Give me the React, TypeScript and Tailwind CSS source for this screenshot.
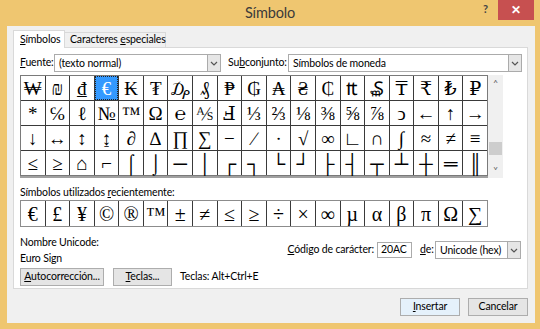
import React from 'react';

const ui = { fontFamily: 'Lato, "Noto Sans", sans-serif', letterSpacing: '-0.15px' };
const serif = { fontFamily: '"Liberation Serif", "DejaVu Serif", serif', letterSpacing: '0' };

const rows = [
  ['₩', '₪', '₫', '€', '₭', '₮', '₯', '₰', '₱', '₲', '₳', '₴', '₵', '₶', '₷', '₸', '₹', '₺', '₽'],
  ['*', '℅', 'ℓ', '№', '™', 'Ω', '℮', '⅍', 'Ⅎ', '⅓', '⅔', '⅛', '⅜', '⅝', '⅞', 'ↄ', '←', '↑', '→'],
  ['↓', '↔', '↕', '↨', '∂', '∆', '∏', '∑', '−', '∕', '∙', '√', '∞', '∟', '∩', '∫', '≈', '≠', '≡'],
  ['≤', '≥', '⌂', '⌐', '⌠', '⌡', '─', '│', '┌', '┐', '└', '┘', '├', '┤', '┬', '┴', '┼', '═', '║'],
];

const recent = ['€', '£', '¥', '©', '®', '™', '±', '≠', '≤', '≥', '÷', '×', '∞', 'µ', 'α', 'β', 'π', 'Ω', '∑'];

function Chevron() {
  return (
    <svg width="8" height="5" viewBox="0 0 8 5" className="text-[#555]">
      <path d="M1 1l3 3 3-3" fill="none" stroke="currentColor" strokeWidth="1.2" />
    </svg>
  );
}

function Select({ value, className }: { value: string; className: string }) {
  return (
    <div className={`flex h-[18px] shrink-0 items-stretch border border-[#ABABAB] bg-white ${className}`}>
      <div className="flex-1 whitespace-nowrap pl-[4px] leading-[16px] text-black">{value}</div>
      <div className="flex w-[13px] items-center justify-center border-l border-[#ABABAB] bg-[#E6E6E6]">
        <Chevron />
      </div>
    </div>
  );
}

function Button({ children, className = '' }: { children: React.ReactNode; className?: string }) {
  return (
    <div
      className={`flex h-[18px] shrink-0 items-center justify-center whitespace-nowrap border border-[#ADADAD] bg-[#E5E5E5] text-black ${className}`}
    >
      {children}
    </div>
  );
}

export default function App() {
  return (
    <div className="flex h-[329px] w-[540px] flex-col overflow-hidden bg-[#EFC670]" style={ui}>
      {/* title bar */}
      <div className="relative flex h-[26px] items-center justify-center">
        <span className="text-[14.5px] text-[#3A3A3A]">Símbolo</span>
        <div className="absolute right-[6px] top-0 flex items-start">
          <span className="mr-[10px] mt-[1px] text-[11px] font-bold text-[#444]">?</span>
          <div className="flex h-[20px] w-[36px] items-center justify-center bg-[#C75050] text-[12px] font-bold text-white">
            ✕
          </div>
        </div>
      </div>

      {/* body */}
      <div className="mb-[6px] ml-[7px] mr-[5px] flex flex-1 flex-col whitespace-nowrap bg-[#F0F0F0] text-[10.5px] text-black">
        {/* tabs */}
        <div className="flex h-[21px] items-end pl-[6px] pt-[4px]">
          <div className="relative z-10 -mb-px flex h-[18px] w-[52px] items-start border border-b-0 border-[#D9D9D9] bg-white pl-[6px] pt-[1px]">
            <span>
              <u>S</u>ímbolos
            </span>
          </div>
          <div className="flex h-[15px] w-[101px] items-center border border-b-0 border-l-0 border-[#D9D9D9] bg-[#F0F0F0] pl-[5px]">
            <span>
              Caracteres <u>e</u>speciales
            </span>
          </div>
        </div>

        {/* panel */}
        <div className="ml-[6px] mr-[7px] flex h-[242px] flex-col border border-[#D9D9D9] bg-white px-[6px] pt-[6px]">
          {/* font row */}
          <div className="flex h-[18px] items-center">
            <span className="w-[34px] shrink-0">
              <u>F</u>uente:
            </span>
            <Select value="(texto normal)" className="w-[167px]" />
            <span className="ml-[7px] w-[60px] shrink-0">
              Su<u>b</u>conjunto:
            </span>
            <Select value="Símbolos de moneda" className="w-[234px]" />
          </div>

          {/* grid + scrollbar */}
          <div className="mt-[3px] flex">
            <div className="w-[468px] border-b-2 border-[#A0A0A0]">
              <div className="grid grid-cols-[repeat(19,minmax(0,1fr))] gap-px border border-[#7A7A7A] bg-[#3A3A3A]">
                {rows.flat().map((c, i) => (
                  <div
                    key={i}
                    className={`flex h-[24px] items-center justify-center text-[19px] leading-none ${
                      i === 3 ? 'border border-dotted border-[#222] bg-[#3399FF] text-white' : 'bg-white text-black'
                    }`}
                    style={serif}
                  >
                    {c}
                  </div>
                ))}
              </div>
            </div>
            <div className="flex w-[15px] flex-col items-center bg-[#F0F0F0]">
              <span className="mt-[1px] h-[14px] text-[10px] leading-[14px] text-[#606060]">˄</span>
              <div className="mt-[52px] h-[13px] w-[13px] bg-[#CDCDCD]" />
              <div className="flex-1" />
              <span className="mb-[2px] h-[12px] text-[10px] leading-[12px] text-[#606060]">˅</span>
            </div>
          </div>

          {/* recent */}
          <div className="mt-[7px] h-[15px] leading-[15px]">
            Símbolos utilizados <u>r</u>ecientemente:
          </div>
          <div className="grid w-[468px] grid-cols-[repeat(19,minmax(0,1fr))] gap-px border border-[#8C8C8C] bg-[#3A3A3A]">
            {recent.map((c, i) => (
              <div
                key={i}
                className="flex h-[25px] items-center justify-center bg-white text-[20px] leading-none text-black"
                style={serif}
              >
                {c}
              </div>
            ))}
          </div>

          {/* unicode info */}
          <div className="mt-[7px] flex items-start">
            <div className="flex flex-col">
              <span className="h-[16px] leading-[16px]">Nombre Unicode:</span>
              <span className="h-[16px] leading-[16px]">Euro Sign</span>
            </div>
            <div className="flex-1" />
            <div className="mt-[8px] flex h-[16px] items-center">
              <span>
                <u>C</u>ódigo de carácter:
              </span>
              <div className="ml-[3px] flex h-[16px] w-[35px] shrink-0 items-center border border-[#ABABAB] bg-white pl-[3px]">
                20AC
              </div>
              <span className="ml-[8px] w-[15px] shrink-0">
                <u>d</u>e:
              </span>
              <Select value="Unicode (hex)" className="h-[17px] w-[86px]" />
            </div>
          </div>

          {/* action buttons */}
          <div className="mt-[2px] flex items-center">
            <Button className="w-[84px]">
              <span>
                <u>A</u>utocorrección...
              </span>
            </Button>
            <Button className="ml-[9px] w-[59px]">
              <span>
                <u>T</u>eclas...
              </span>
            </Button>
            <span className="ml-[8px]">Teclas: Alt+Ctrl+E</span>
          </div>
        </div>

        {/* dialog buttons */}
        <div className="mr-[7px] mt-[9px] flex justify-end">
          <Button className="w-[60px] border-[#3C7FB1] bg-[#E5F1FB]">
            <span>
              <u>I</u>nsertar
            </span>
          </Button>
          <Button className="ml-[8px] w-[60px]">Cancelar</Button>
        </div>
      </div>
    </div>
  );
}
